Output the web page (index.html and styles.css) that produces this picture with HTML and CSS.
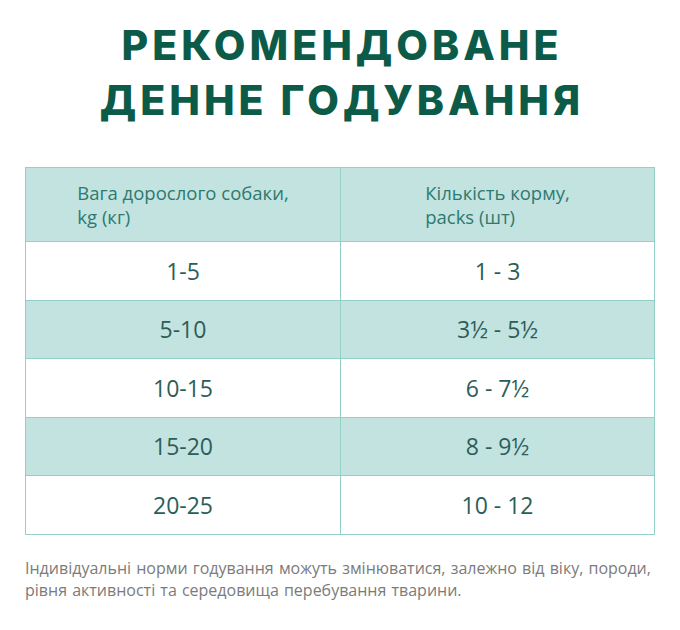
FILE: index.html
```html
<!DOCTYPE html>
<html lang="uk">
<head>
<meta charset="utf-8">
<link rel="stylesheet" href="styles.css">
</head>
<body>
<div class="page">
  <h1 class="title">РЕКОМЕНДОВАНЕ<br>ДЕННЕ ГОДУВАННЯ</h1>
  <div class="table">
    <div class="row head">
      <div class="cell"><span class="hd">Вага дорослого собаки,<br>kg (кг)</span></div>
      <div class="cell"><span class="hd">Кількість корму,<br>packs (шт)</span></div>
    </div>
    <div class="row">
      <div class="cell">1-5</div>
      <div class="cell">1 - 3</div>
    </div>
    <div class="row alt">
      <div class="cell">5-10</div>
      <div class="cell">3½ - 5½</div>
    </div>
    <div class="row">
      <div class="cell">10-15</div>
      <div class="cell">6 - 7½</div>
    </div>
    <div class="row alt">
      <div class="cell">15-20</div>
      <div class="cell">8 - 9½</div>
    </div>
    <div class="row">
      <div class="cell">20-25</div>
      <div class="cell">10 - 12</div>
    </div>
  </div>
  <p class="note">Індивідуальні норми годування можуть змінюватися, залежно від віку, породи, рівня активності та середовища перебування тварини.</p>
</div>
</body>
</html>
```

FILE: styles.css
```css
html, body {
  margin: 0;
  padding: 0;
  background: #ffffff;
}
.page {
  width: 680px;
  padding: 18px 25px 0;
  box-sizing: border-box;
  font-family: "Open Sans", "Noto Sans", sans-serif;
}
.title {
  margin: 0;
  padding-left: 4px;
  text-align: center;
  font-family: "Inter", "Noto Sans", sans-serif;
  font-weight: 800;
  font-size: 41px;
  line-height: 55px;
  letter-spacing: 4px;
  color: #0c5b49;
}
.table {
  margin-top: 39px;
  border: 1px solid #93d0c8;
  display: flex;
  flex-direction: column;
}
.row {
  display: grid;
  grid-template-columns: 1fr 1fr;
  height: 58.5px;
  box-sizing: border-box;
  border-top: 1px solid #93d0c8;
  background: #ffffff;
}
.row.alt, .row.head {
  background: #c3e3e1;
}
.row.head {
  height: 73px;
  border-top: none;
}
.cell {
  display: flex;
  align-items: center;
  justify-content: center;
  font-size: 23px;
  color: #2b5e58;
}
.cell + .cell {
  border-left: 1px solid #93d0c8;
}
.hd {
  display: inline-block;
  text-align: left;
  font-size: 18.5px;
  line-height: 24px;
  color: #2d7a6e;
}
.note {
  margin: 22px 0 0;
  font-size: 16px;
  word-spacing: 1px;
  line-height: 22px;
  color: #7b7b7b;
}
```
